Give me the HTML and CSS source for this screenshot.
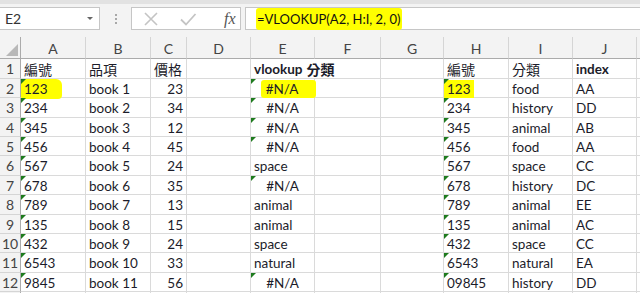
FILE: index.html
```html
<!DOCTYPE html>
<html lang="zh-Hant">
<head>
  <meta charset="UTF-8">
  <meta name="viewport" content="width=device-width, initial-scale=1">
  <title>VLOOKUP</title>
  <link rel="stylesheet" href="styles.css">
</head>
<body>
  <div class="topline"></div>

  <div class="formula-bar">
    <div class="name-box">
      <span>E2</span>
      <span class="caret"></span>
    </div>
    <div class="grip"><i></i><i></i><i></i></div>
    <div class="fx-box">
      <svg width="16" height="16" viewBox="0 0 16 16">
        <path d="M2 2 L14 14 M14 2 L2 14" stroke="#c4c4c4" stroke-width="1.6" fill="none"/>
      </svg>
      <svg width="18" height="16" viewBox="0 0 18 16">
        <path d="M2 8.5 L7 13.5 L16.5 3" stroke="#c4c4c4" stroke-width="1.8" fill="none"/>
      </svg>
      <span class="fx">fx</span>
    </div>
    <div class="formula"><span class="mark-formula">=VLOOKUP(A2, H:I, 2, 0)</span></div>
  </div>

  <div class="sheet">
    <!-- cabeçalho das colunas -->
    <div class="corner"><span class="corner-tri"></span></div>
    <div class="ch">A</div><div class="ch">B</div><div class="ch">C</div><div class="ch">D</div><div class="ch">E</div>
    <div class="ch">F</div><div class="ch">G</div><div class="ch">H</div><div class="ch">I</div><div class="ch">J</div>
    <div class="ch end"></div>

    <div class="rh">1</div>
    <div class="c cjk">編號</div><div class="c cjk">品項</div><div class="c cjk">價格</div><div class="c"></div>
    <div class="c b spill">vlookup <span class="cjk">分類</span></div><div class="c"></div><div class="c"></div>
    <div class="c cjk">編號</div><div class="c cjk">分類</div><div class="c b">index</div><div class="c end"></div>

    <div class="rh">2</div>
    <div class="c flag"><span class="mark-a">123</span></div><div class="c">book 1</div><div class="c num">23</div><div class="c"></div>
    <div class="c flag err"><span class="mark-e">#N/A</span></div><div class="c"></div><div class="c"></div>
    <div class="c flag"><span class="mark-h">123</span></div><div class="c">food</div><div class="c">AA</div><div class="c end"></div>

    <div class="rh">3</div>
    <div class="c flag">234</div><div class="c">book 2</div><div class="c num">34</div><div class="c"></div>
    <div class="c flag err">#N/A</div><div class="c"></div><div class="c"></div>
    <div class="c flag">234</div><div class="c">history</div><div class="c">DD</div><div class="c end"></div>

    <div class="rh">4</div>
    <div class="c flag">345</div><div class="c">book 3</div><div class="c num">12</div><div class="c"></div>
    <div class="c flag err">#N/A</div><div class="c"></div><div class="c"></div>
    <div class="c flag">345</div><div class="c">animal</div><div class="c">AB</div><div class="c end"></div>

    <div class="rh">5</div>
    <div class="c flag">456</div><div class="c">book 4</div><div class="c num">45</div><div class="c"></div>
    <div class="c flag err">#N/A</div><div class="c"></div><div class="c"></div>
    <div class="c flag">456</div><div class="c">food</div><div class="c">AA</div><div class="c end"></div>

    <div class="rh">6</div>
    <div class="c flag">567</div><div class="c">book 5</div><div class="c num">24</div><div class="c"></div>
    <div class="c">space</div><div class="c"></div><div class="c"></div>
    <div class="c flag">567</div><div class="c">space</div><div class="c">CC</div><div class="c end"></div>

    <div class="rh">7</div>
    <div class="c flag">678</div><div class="c">book 6</div><div class="c num">35</div><div class="c"></div>
    <div class="c flag err">#N/A</div><div class="c"></div><div class="c"></div>
    <div class="c flag">678</div><div class="c">history</div><div class="c">DC</div><div class="c end"></div>

    <div class="rh">8</div>
    <div class="c flag">789</div><div class="c">book 7</div><div class="c num">13</div><div class="c"></div>
    <div class="c">animal</div><div class="c"></div><div class="c"></div>
    <div class="c flag">789</div><div class="c">animal</div><div class="c">EE</div><div class="c end"></div>

    <div class="rh">9</div>
    <div class="c flag">135</div><div class="c">book 8</div><div class="c num">15</div><div class="c"></div>
    <div class="c">animal</div><div class="c"></div><div class="c"></div>
    <div class="c flag">135</div><div class="c">animal</div><div class="c">AC</div><div class="c end"></div>

    <div class="rh">10</div>
    <div class="c flag">432</div><div class="c">book 9</div><div class="c num">24</div><div class="c"></div>
    <div class="c">space</div><div class="c"></div><div class="c"></div>
    <div class="c flag">432</div><div class="c">space</div><div class="c">CC</div><div class="c end"></div>

    <div class="rh">11</div>
    <div class="c flag">6543</div><div class="c">book 10</div><div class="c num">33</div><div class="c"></div>
    <div class="c">natural</div><div class="c"></div><div class="c"></div>
    <div class="c flag">6543</div><div class="c">natural</div><div class="c">EA</div><div class="c end"></div>

    <div class="rh">12</div>
    <div class="c flag">9845</div><div class="c">book 11</div><div class="c num">56</div><div class="c"></div>
    <div class="c flag err">#N/A</div><div class="c"></div><div class="c"></div>
    <div class="c flag">09845</div><div class="c">history</div><div class="c">DD</div><div class="c end"></div>

    <!-- linha 13 quase toda fora do quadro -->
    <div class="rh"></div>
    <div class="c"></div><div class="c"></div><div class="c"></div><div class="c"></div><div class="c"></div>
    <div class="c"></div><div class="c"></div><div class="c"></div><div class="c"></div><div class="c"></div>
    <div class="c end"></div>
  </div>
</body>
</html>
```

FILE: styles.css
```css
html, body {
  margin: 0;
  padding: 0;
}
body {
  width: 640px;
  height: 293px;
  overflow: hidden;
  background-color: #f3f3f3;
  font-family: Lato, "Noto Sans CJK TC", sans-serif;
  font-size: 13.5px;
  color: #1c1c2a;
}
.cjk {
  font-family: "Noto Sans CJK TC", sans-serif;
  font-size: 14px;
}

/* barra de fórmula */
.topline {
  height: 4px;
  background-color: #e2e2e2;
}
.formula-bar {
  height: 33px;
  box-sizing: border-box;
  padding-top: 3px;
  display: flex;
  align-items: flex-start;
}
.name-box {
  width: 100px;
  height: 23px;
  box-sizing: border-box;
  background-color: #fff;
  border: 1px solid #c6c6c6;
  border-left: none;
  display: flex;
  align-items: center;
  justify-content: space-between;
  padding: 0 5px 0 5px;
  color: #333;
  font-size: 14px;
}
.caret {
  width: 0;
  height: 0;
  border-left: 3px solid transparent;
  border-right: 3px solid transparent;
  border-top: 3px solid #666;
  margin-right: 1px;
}
.grip {
  width: 31px;
  height: 23px;
  display: flex;
  flex-direction: column;
  align-items: center;
  justify-content: center;
  gap: 2px;
}
.grip i {
  width: 2px;
  height: 2px;
  background-color: #a8a8a8;
}
.fx-box {
  width: 110px;
  height: 23px;
  box-sizing: border-box;
  background-color: #fff;
  border: 1px solid #c6c6c6;
  display: flex;
  align-items: center;
  padding: 0 0 0 11px;
  gap: 20px;
}
.fx {
  font-family: "Liberation Serif", serif;
  font-style: italic;
  font-size: 16px;
  color: #555;
  margin-left: 7px;
}
.formula {
  flex: 1;
  height: 23px;
  margin-left: 4px;
  box-sizing: border-box;
  background-color: #fff;
  border: 1px solid #c6c6c6;
  border-right: none;
  padding-left: 10px;
  display: flex;
  align-items: center;
  font-size: 13px;
  color: #111;
}
.mark-formula {
  background-color: #ffff00;
  line-height: 22px;
  padding: 0 2px 0 1px;
  border-radius: 3px;
}

/* planilha */
.sheet {
  background-color: #fff;
  display: grid;
  grid-template-columns: 21px 65px 65px 36px 64px 64px 66px 63px 65px 64px 64px 1fr;
  grid-template-rows: 22px 20px 19px 20px 19px 19px 20px 19px 20px 19px 19px 20px 19px 20px;
}
.corner, .ch, .rh {
  background-color: #f3f3f3;
  color: #444;
  box-sizing: border-box;
}
.corner {
  border-right: 1px solid #ababab;
  border-bottom: 1px solid #ababab;
  position: relative;
}
.corner-tri {
  position: absolute;
  right: 2px;
  bottom: 2px;
  width: 0;
  height: 0;
  border-left: 12px solid transparent;
  border-bottom: 12px solid #b8b8b8;
}
.ch {
  border-right: 1px solid #d5d5d5;
  border-bottom: 1px solid #ababab;
  display: flex;
  align-items: center;
  justify-content: center;
  font-size: 14px;
  padding-top: 2px;
}
.rh {
  border-right: 1px solid #ababab;
  border-bottom: 1px solid #d5d5d5;
  display: flex;
  align-items: center;
  justify-content: center;
  font-size: 14px;
}
.end {
  border-right: none;
}
.c {
  box-sizing: border-box;
  border-right: 1px solid #dadada;
  border-bottom: 1px solid #dadada;
  display: flex;
  align-items: center;
  padding: 1px 3px 0 3px;
  white-space: nowrap;
  position: relative;
}
.c.end {
  border-right: none;
}
.b {
  font-weight: bold;
}
.b .cjk {
  font-weight: bold;
  margin-left: 4px;
}
.spill {
  border-right: none;
  overflow: visible;
}
.num {
  justify-content: flex-end;
}
.err {
  justify-content: center;
}
.flag::before {
  content: "";
  position: absolute;
  left: 0;
  top: 0;
  width: 0;
  height: 0;
  border-top: 5px solid #1e7b1e;
  border-right: 5px solid transparent;
}
.mark-a {
  background-color: #ffff00;
  margin-left: -3px;
  padding: 2px 14px 2px 3px;
  border-radius: 2px 6px 4px 2px;
}
.mark-e {
  background-color: #ffff00;
  margin-left: 12px;
  padding: 1px 18px 1px 5px;
  border-radius: 3px;
}
.mark-h {
  background-color: #ffff00;
  margin-left: -3px;
  padding: 1px 3px 1px 3px;
}
```
